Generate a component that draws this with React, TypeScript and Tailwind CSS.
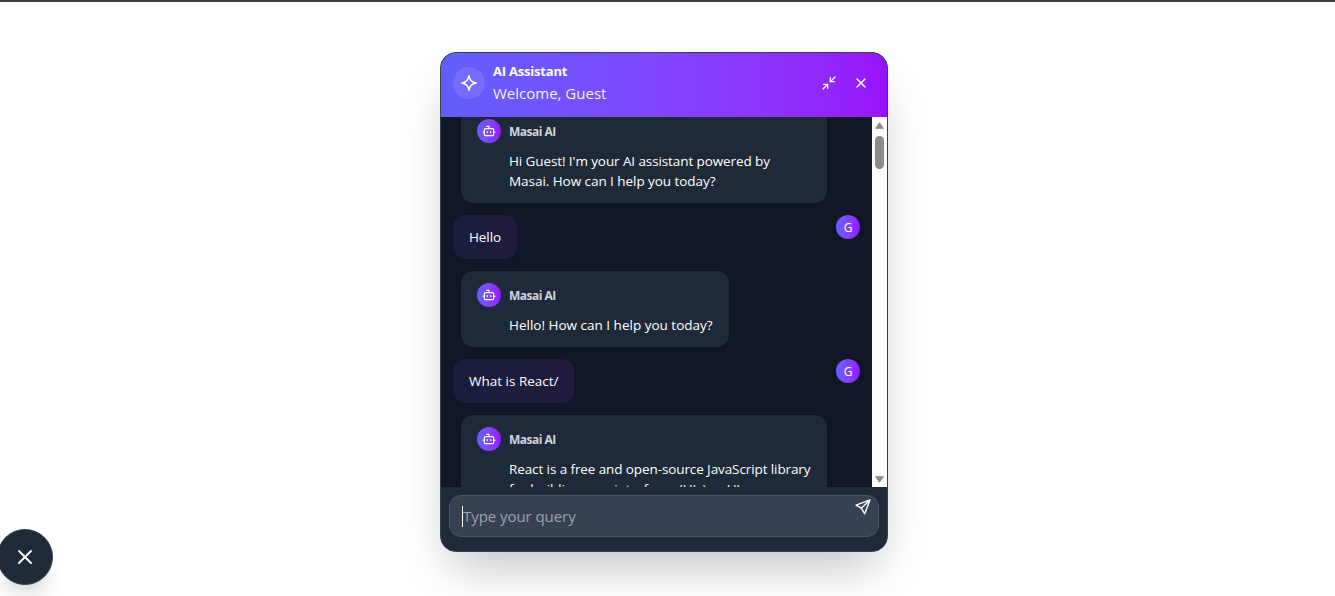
import React from "react";
import { Bot, Minimize2, X } from "lucide-react";

const accent = "bg-linear-to-r from-[#615fff] to-[#9810fa]";

function BotMessage({ lines }: { lines: { text: string; cls: string }[] }) {
  return (
    <div className="ml-2 w-fit rounded-xl bg-[#1e2939] px-4 py-3 shadow-sm">
      <div className="flex items-center gap-2">
        <div className={`flex size-6 items-center justify-center rounded-full ${accent}`}>
          <Bot size={14} className="text-white" />
        </div>
        <span className="pt-px text-[12px] font-bold leading-4 tracking-[-0.5px] text-[#d1d5dc]">Masai AI</span>
      </div>
      <div className="mt-2 pl-8 text-[13.5px] leading-5 text-white">
        {lines.map((l) => (
          <div key={l.text} className={`whitespace-nowrap ${l.cls}`}>{l.text}</div>
        ))}
      </div>
    </div>
  );
}

function UserMessage({ text, cls }: { text: string; cls: string }) {
  return (
    <div className="flex items-start justify-between">
      <div className="rounded-xl bg-linear-to-r from-[#181e3d] to-[#221b3d] px-4 py-3 text-[13.5px] leading-5 text-white shadow-sm">
        <div className={`whitespace-nowrap ${cls}`}>{text}</div>
      </div>
      <div className={`flex size-6 items-center justify-center rounded-full pt-px text-[12px] text-white ${accent}`}>G</div>
    </div>
  );
}

function Scrollbar() {
  return (
    <div className="flex w-[15px] shrink-0 flex-col items-center bg-[#fcfcfc] pt-[5px] pb-[4px]">
      <svg width="9" height="7" viewBox="0 0 9 7"><path d="M4.5 .8 8.3 6.3H.7Z" fill="#8b8b8b" stroke="#8b8b8b" strokeLinejoin="round" /></svg>
      <div className="mt-[7px] h-[33px] w-[9px] rounded-full bg-[#8b8b8b]" />
      <svg className="mt-auto" width="9" height="7" viewBox="0 0 9 7"><path d="M4.5 6.2.7.7h7.6Z" fill="#8b8b8b" stroke="#8b8b8b" strokeLinejoin="round" /></svg>
    </div>
  );
}

export default function App() {
  return (
    <div className="relative flex h-[596px] w-[1335px] justify-center overflow-hidden border-t-2 border-[#3c3a3b] bg-white pt-[50px] font-['Open_Sans','Noto_Sans',sans-serif]">
      <div className="mr-[7px] flex h-[500px] w-[448px] flex-col overflow-hidden rounded-2xl border border-[#364153] bg-[#1e2939] shadow-2xl">
        <header className="flex h-16 shrink-0 items-center bg-linear-to-r from-[#615fff] to-[#9810fa] px-3 text-white">
          <div className="mb-1 flex size-8 items-center justify-center rounded-full bg-white/10">
            <svg width="18" height="18" viewBox="0 0 18 18" fill="none" stroke="currentColor" strokeWidth="1.6" strokeLinejoin="round">
              <path d="M9 1.8C9.6 5.9 12.1 8.4 16.2 9 12.1 9.6 9.6 12.1 9 16.2 8.4 12.1 5.9 9.6 1.8 9 5.9 8.4 8.4 5.9 9 1.8Z" />
            </svg>
          </div>
          <div className="mb-1 ml-2 flex-1">
            <div className="text-[13px] font-bold leading-5 tracking-[-0.2px]">AI Assistant</div>
            <div className="text-[15px] leading-6 text-white/95">Welcome, Guest</div>
          </div>
          <div className="mr-[6px] mb-1 flex items-center gap-4">
            <Minimize2 size={16} />
            <X size={16} />
          </div>
        </header>
        <div className="flex h-[370px] shrink-0 bg-[#101828]">
          <div className="flex-1 overflow-hidden px-3">
            <div className="-mt-[10px] flex flex-col gap-3">
              <BotMessage
                lines={[
                  { text: "Hi Guest! I'm your AI assistant powered by", cls: "w-[302px] tracking-[-0.1px]" },
                  { text: "Masai. How can I help you today?", cls: "tracking-[-0.05px]" },
                ]}
              />
              <UserMessage text="Hello" cls="w-8 tracking-[-0.1px]" />
              <BotMessage lines={[{ text: "Hello! How can I help you today?", cls: "w-[204px] tracking-[0px]" }]} />
              <UserMessage text="What is React/" cls="w-[89px] tracking-[0px]" />
              <BotMessage
                lines={[
                  { text: "React is a free and open-source JavaScript library", cls: "w-[302px] tracking-[-0.1px]" },
                  { text: "for building user interfaces (UIs) or UI", cls: "tracking-[-0.1px]" },
                ]}
              />
            </div>
          </div>
          <Scrollbar />
        </div>
        <div className="flex-1 p-2">
          <div className="flex h-[42px] justify-between rounded-xl border border-[#4a5565] bg-[#364153] pr-[7px] pl-3">
            <div className="flex items-center">
              <div className="h-[21px] w-px bg-white" />
              <span className="text-[15px] tracking-[-0.06px] text-[#99a1af]">Type your query</span>
            </div>
            <svg className="mt-[3px]" width="16" height="16" viewBox="0 0 16 16" fill="none" stroke="white" strokeWidth="1.4" strokeLinejoin="round" strokeLinecap="round">
              <path d="M15 .9 1 6.1 6.3 9.2 9.7 14.8ZM15 .9 6.3 9.2" />
            </svg>
          </div>
        </div>
      </div>
      <button className="absolute top-[527px] -left-[3px] flex size-14 items-center justify-center rounded-full border border-[#364153] bg-[#1e2939] text-white shadow-xl">
        <X size={24} />
      </button>
    </div>
  );
}
